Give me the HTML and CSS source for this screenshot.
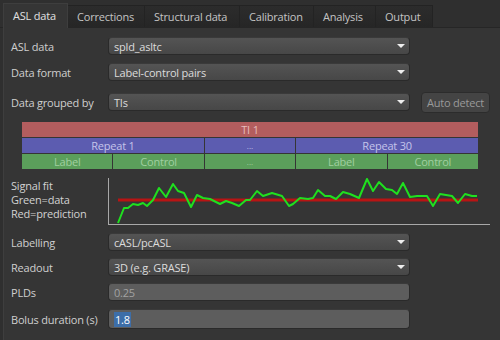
FILE: index.html
```html
<!DOCTYPE html>
<html lang="en">
  <head>
    <meta charset="UTF-8" />
    <title>ASL data</title>
    <link rel="stylesheet" href="styles.css">
  </head>
  <body>
    <div class="tabs">
      <div class="tab active">ASL data</div>
      <div class="tab">Corrections</div>
      <div class="tab">Structural data</div>
      <div class="tab">Calibration</div>
      <div class="tab">Analysis</div>
      <div class="tab">Output</div>
    </div>

    <div class="panel">
      <div class="row r-asl">
        <span class="label">ASL data</span>
        <div class="combo">spld_asltc<span class="arrow"></span></div>
      </div>
      <div class="row r-format">
        <span class="label">Data format</span>
        <div class="combo">Label-control pairs<span class="arrow"></span></div>
      </div>
      <div class="row r-grouped">
        <span class="label">Data grouped by</span>
        <div class="combo">TIs<span class="arrow"></span></div>
        <button class="btn">Auto detect</button>
      </div>

      <!-- data ordering preview -->
      <div class="blocks">
        <div class="blk ti span5">TI 1</div>
        <div class="blk rep span2">Repeat 1</div>
        <div class="blk rep dots">...</div>
        <div class="blk rep span2">Repeat 30</div>
        <div class="blk lc">Label</div>
        <div class="blk lc">Control</div>
        <div class="blk lc dots">...</div>
        <div class="blk lc">Label</div>
        <div class="blk lc">Control</div>
      </div>

      <div class="fit">
        <div class="fit-text">Signal fit<br />Green=data<br />Red=prediction</div>
        <svg class="plot" width="382" height="48" viewBox="0 0 382 48">
          <line x1="10" y1="22" x2="370" y2="22" stroke="#b81414" stroke-width="3" />
          <polyline fill="none" stroke="#1fe01f" stroke-width="2" stroke-linejoin="round"
            points="10,45 16,30 20,30 25,26 30,27 35,25 39,28 45,22 51,10 58,19 65,6 70,13 76,15 83,29 89,17 95,20 102,21 112,26 118,23 124,25 131,28 138,22 142,22 149,13 155,18 164,15 174,18 181,28 185,26 192,20 200,21 205,20 210,12 217,18 222,18 228,21 235,14 242,16 251,20 259,1 265,13 271,4 278,11 284,12 289,16 295,5 302,19 309,18 319,18 325,28 332,16 344,18 350,25 357,16 364,18 369,18" />
          <line x1="0.5" y1="0" x2="0.5" y2="47" stroke="#a8a8a8" stroke-width="1" />
          <line x1="0" y1="46.5" x2="382" y2="46.5" stroke="#a8a8a8" stroke-width="1" />
        </svg>
      </div>

      <div class="row r-label">
        <span class="label">Labelling</span>
        <div class="combo">cASL/pcASL<span class="arrow"></span></div>
      </div>
      <div class="row r-readout">
        <span class="label">Readout</span>
        <div class="combo">3D (e.g. GRASE)<span class="arrow"></span></div>
      </div>
      <div class="row r-plds">
        <span class="label">PLDs</span>
        <div class="field dim">0.25</div>
      </div>
      <div class="row r-bolus">
        <span class="label">Bolus duration (s)</span>
        <div class="field"><span class="sel">1.8</span></div>
      </div>
    </div>
  </body>
</html>
```

FILE: styles.css
```css
* {
  box-sizing: border-box;
  margin: 0;
  padding: 0;
}

body {
  font-family: "Open Sans", "DejaVu Sans", sans-serif;
  font-size: 11px;
  letter-spacing: -0.2px;
  color: #d2d2d2;
  background: #2f2f2f;
  width: 500px;
  height: 340px;
  overflow: hidden;
}

/* Tabs */
.tabs {
  display: flex;
  align-items: flex-end;
  height: 28px;
  padding: 3px 0 0 3px;
  border-bottom: 1px solid #262626;
}

.tab {
  height: 22px;
  line-height: 21px;
  padding: 0 0 0 9px;
  white-space: nowrap;
  color: #c4c4c4;
  background: linear-gradient(#2c2c2c, #262626);
  border: 1px solid #232323;
  border-left: none;
  border-bottom: none;
}

.tab:nth-child(2) { width: 77px; }
.tab:nth-child(3) { width: 95px; }
.tab:nth-child(4) { width: 74px; }
.tab:nth-child(5) { width: 62px; }
.tab:nth-child(6) { width: 57px; }

.tab.active {
  width: 65px;
  height: 25px;
  line-height: 24px;
  color: #e0e0e0;
  background: #353535;
  border: 1px solid #3e3e3e;
  border-bottom: none;
  margin-bottom: -1px;
}

/* Panel */
.panel {
  margin-left: 3px;
  height: 312px;
  background: #353535;
  border-left: 1px solid #3e3e3e;
  padding: 9px 0 0 7px;
}

.row {
  display: flex;
  align-items: center;
  height: 18px;
}

.label {
  width: 97px;
  flex-shrink: 0;
  white-space: nowrap;
  color: #cfcfcf;
}

.combo,
.field {
  position: relative;
  width: 302px;
  height: 18px;
  line-height: 17px;
  padding-left: 5px;
  border-radius: 4px;
  color: #dcdcdc;
  border: 1px solid #2a2a2a;
  border-top-color: #3a3a3a;
}

.combo {
  background: linear-gradient(#545454, #474747);
}

.arrow {
  position: absolute;
  right: 4px;
  top: 6px;
  border-left: 4px solid transparent;
  border-right: 4px solid transparent;
  border-top: 4px solid #eeeeee;
}

.field {
  background: #5d5d5d;
}

.field.dim {
  color: #a2a2a2;
}

.sel {
  background: #3d6ea8;
  color: #ffffff;
  padding: 0 1px;
}

.r-format { margin-top: 8px; }
.r-grouped { margin-top: 12px; }

.btn {
  margin-left: 11px;
  width: 69px;
  height: 21px;
  border-radius: 4px;
  background: #444444;
  border: 1px solid #2c2c2c;
  color: #9a9a9a;
  font-family: inherit;
  font-size: 11px;
  letter-spacing: -0.2px;
}

/* Ordering blocks */
.blocks {
  display: grid;
  grid-template-columns: repeat(5, 1fr);
  column-gap: 1px;
  row-gap: 1px;
  width: 456px;
  margin: 11px 0 0 11px;
}

.blk {
  height: 15px;
  line-height: 15px;
  text-align: center;
  font-size: 11px;
}

.span5 { grid-column: span 5; }
.span2 { grid-column: span 2; }

.ti {
  background: #b35d5e;
  color: #e6bcbc;
}

.rep {
  background: #5c5cb0;
  color: #c4c4ea;
}

.lc {
  background: #5b9f5b;
  color: #a0cfa0;
}

.dots {
  font-size: 8px;
  letter-spacing: 0;
}

/* Fit plot */
.fit {
  display: flex;
  margin-top: 9px;
  height: 48px;
}

.fit-text {
  width: 97px;
  line-height: 14px;
  padding-top: 1px;
}

.plot {
  display: block;
}

.r-label { margin-top: 7px; }
.r-readout { margin-top: 7px; }
.r-plds { margin-top: 7px; }
.r-bolus { margin-top: 8px; height: 20px; }
.r-bolus .field { height: 20px; line-height: 19px; }
```
